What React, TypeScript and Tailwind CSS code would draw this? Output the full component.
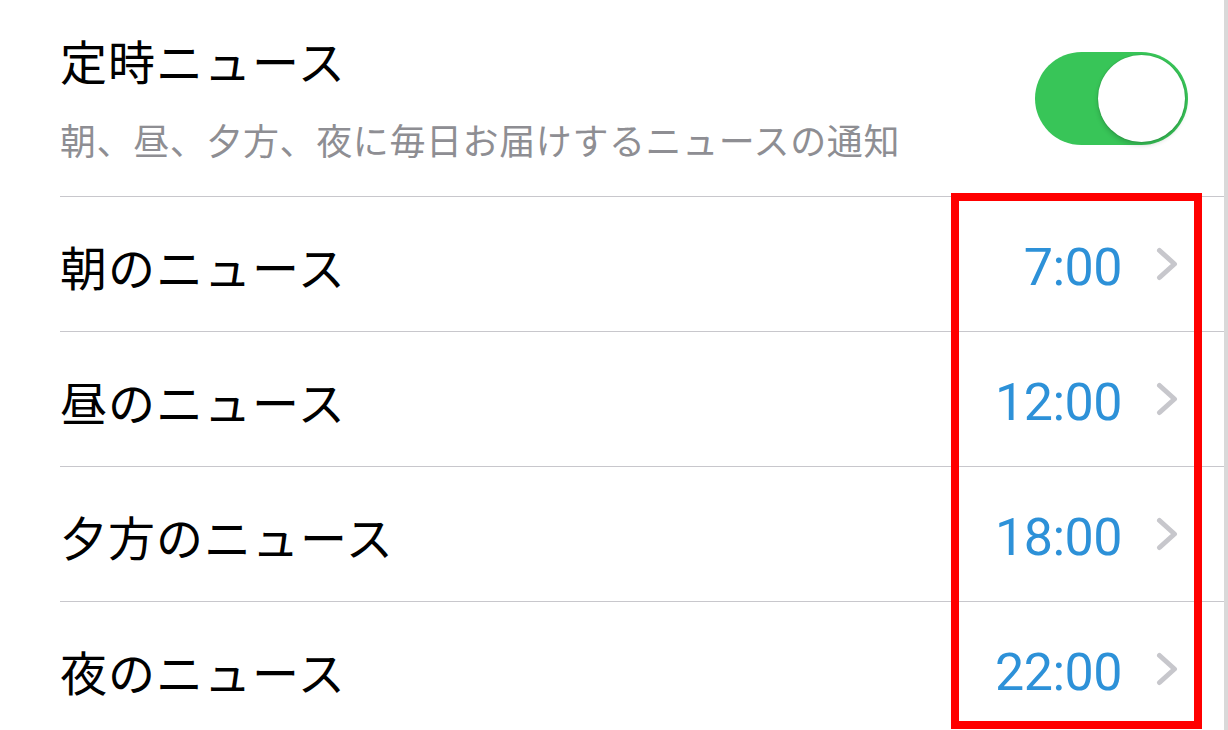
import React from "react";

const jp = { fontFamily: '"Noto Sans CJK JP", "Noto Sans", sans-serif' };

function Chevron() {
  return (
    <svg width="22" height="34" viewBox="0 0 22 34" className="ml-[34px] shrink-0">
      <polyline
        points="3.5,3.5 18.5,17 3.5,30.5"
        fill="none"
        stroke="#c7c7cc"
        strokeWidth="5"
        strokeLinecap="round"
        strokeLinejoin="round"
      />
    </svg>
  );
}

function Row({ label, time }: { label: string; time: string }) {
  return (
    <div className="flex h-[135px] items-center border-b border-[#c8c7cc] pr-[46px]">
      <span className="flex-1 text-[47px] leading-[56px] text-black mt-[4px] tracking-[1px]" style={jp}>
        {label}
      </span>
      <span
        className="text-[52px] leading-[60px] text-[#2d91d8] mt-[7px] tracking-[-0.5px]"
        style={{ fontFamily: 'Roboto, "Liberation Sans", sans-serif' }}
      >
        {time}
      </span>
      <Chevron />
    </div>
  );
}

export default function App() {
  const rows = [
    { label: "朝のニュース", time: "7:00" },
    { label: "昼のニュース", time: "12:00" },
    { label: "夕方のニュース", time: "18:00" },
    { label: "夜のニュース", time: "22:00" },
  ];
  return (
    <div className="relative flex h-[730px] w-[1228px] overflow-hidden bg-white">
      <div className="flex-1 pl-[60px]">
        <div className="flex h-[197px] items-center border-b border-[#c8c7cc] pr-[36px]">
          <div className="flex flex-1 flex-col self-start pt-[32px]">
            <span className="text-[47px] leading-[56px] text-black tracking-[1px]" style={jp}>
              定時ニュース
            </span>
            <span className="mt-[29px] text-[36px] leading-[44px] text-[#8e8e93] tracking-[0.6px]" style={jp}>
              朝、昼、夕方、夜に毎日お届けするニュースの通知
            </span>
          </div>
          <div className="flex h-[93px] w-[153px] items-center justify-end rounded-full bg-[#38c558] p-[3px]">
            <div className="h-[87px] w-[87px] rounded-full bg-white shadow-[0_0_0_1px_rgba(0,0,0,0.06),0_3px_5px_rgba(0,0,0,0.18)]" />
          </div>
        </div>
        {rows.map((r) => (
          <Row key={r.label} label={r.label} time={r.time} />
        ))}
      </div>
      <div className="w-[4px] shrink-0 bg-[#d9d9d9]" />
      <div className="absolute left-[951px] top-[193px] h-[536px] w-[251px] border-[8px] border-[#ff0000]" />
    </div>
  );
}
